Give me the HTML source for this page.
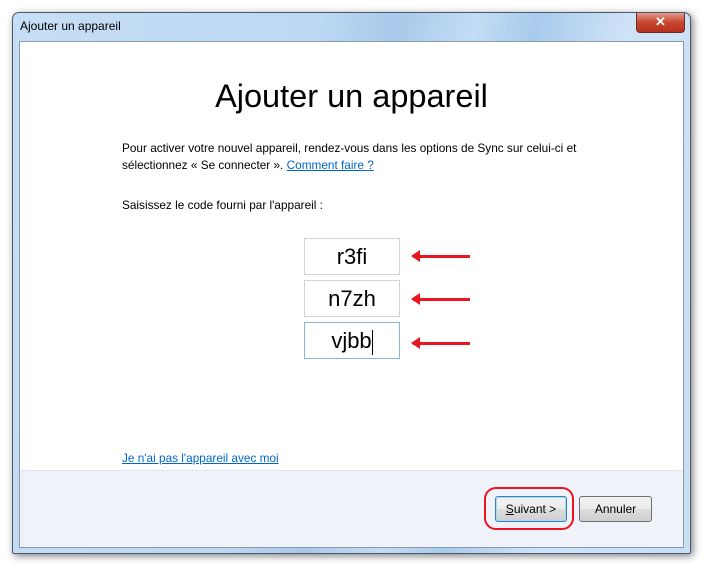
<!DOCTYPE html>
<html><head><style>
body{margin:0;width:705px;height:569px;background:#fff;position:relative;overflow:hidden;font-family:"Liberation Sans",sans-serif;}
.win{position:absolute;left:12px;top:12px;width:677px;height:540px;border:1px solid #4a5a6e;border-radius:7px 7px 2px 2px;background:linear-gradient(100deg,#c6def5 0%,#bcd8f3 40%,#a9c9ea 50%,#c3dcf4 60%,#a9cbec 68%,#cfe3f7 80%,#c8def5 100%);box-shadow:2px 2px 8px rgba(0,0,0,.5);}
.title{position:absolute;left:7px;top:6px;font-size:12px;color:#000;}
.close{position:absolute;left:623px;top:0;width:47px;height:19px;border:1px solid #6d2a22;border-top:none;border-radius:0 0 4px 4px;background:linear-gradient(#e49b8c,#c8452f 50%,#b6321e);color:#fff;font-weight:bold;font-size:13px;text-align:center;line-height:18px;}
.client{position:absolute;left:6px;top:28px;width:663px;height:505px;border:1px solid #8a99ab;background:#fff;}
.foot{position:absolute;left:0;right:0;top:428px;bottom:0;background:#eff2f9;border-top:1px solid #dde4ef;}
h1{position:absolute;left:0;right:0;top:36px;margin:0;text-align:center;font-weight:normal;font-size:32.5px;color:#000;}
.p{position:absolute;left:102px;font-size:11.8px;color:#000;line-height:17px;}
a{color:#0066cc;text-decoration:underline;}
.box{position:absolute;left:284px;width:94px;height:35px;border:1px solid #d0d4da;font-size:22px;text-align:center;line-height:35px;color:#000;}
.arr{position:absolute;left:393px;width:57px;height:3px;background:#e8141e;}
.arr:before{content:"";position:absolute;left:-2px;top:-5px;border-right:9px solid #e8141e;border-top:6.5px solid transparent;border-bottom:6.5px solid transparent;}
.btn{position:absolute;top:454px;height:24px;border:1px solid #707070;border-radius:3px;background:linear-gradient(#f2f2f2,#ebebeb 50%,#dddddd 51%,#cfcfcf);font-size:12px;text-align:center;line-height:24px;}
</style></head><body>
<div class="win">
<div class="title">Ajouter un appareil</div>
<div class="close">✕</div>
<div class="client">
<h1>Ajouter un appareil</h1>
<div class="p" style="top:98px">Pour activer votre nouvel appareil, rendez-vous dans les options de Sync sur celui-ci et<br>sélectionnez « Se connecter ». <a>Comment faire ?</a></div>
<div class="p" style="top:155px">Saisissez le code fourni par l'appareil :</div>
<div class="box" style="top:196px">r3fi</div>
<div class="box" style="top:238px">n7zh</div>
<div class="box" style="top:280px;border-color:#88b4dc">vjbb<span style="display:inline-block;width:1px;height:25px;background:#000;vertical-align:middle"></span></div>
<div class="arr" style="top:213px"></div>
<div class="arr" style="top:256px"></div>
<div class="arr" style="top:300px"></div>
<div class="p" style="top:408px"><a>Je n'ai pas l'appareil avec moi</a></div>
<div class="foot">
<div class="btn" style="left:475px;width:70px;top:25px;border-color:#3c7fb1;box-shadow:inset 0 0 0 1px #9fdcf5;"><u>S</u>uivant &gt;</div>
<div class="btn" style="left:559px;width:71px;top:25px">Annuler</div>
<div style="position:absolute;left:464px;top:16px;width:86px;height:39px;border:2px solid #e8141e;border-radius:12px"></div>
</div>
</div>
</div>
</body></html>
